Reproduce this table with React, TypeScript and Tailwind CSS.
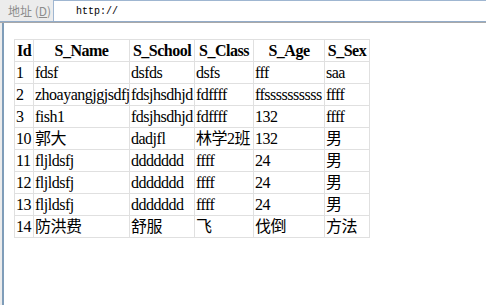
const rows: [string, string, string, string, string, string][] = [
  ["1", "fdsf", "dsfds", "dsfs", "fff", "saa"],
  ["2", "zhoayangjgjsdfj", "fdsjhsdhjd", "fdffff", "ffssssssssss", "ffff"],
  ["3", "fish1", "fdsjhsdhjd", "fdffff", "132", "ffff"],
  ["10", "郭大", "dadjfl", "林学2班", "132", "男"],
  ["11", "fljldsfj", "ddddddd", "ffff", "24", "男"],
  ["12", "fljldsfj", "ddddddd", "ffff", "24", "男"],
  ["13", "fljldsfj", "ddddddd", "ffff", "24", "男"],
  ["14", "防洪费", "舒服", "飞", "伐倒", "方法"],
];

const headers = ["Id", "S_Name", "S_School", "S_Class", "S_Age", "S_Sex"];
const widths = ["w-[19px]", "w-[96px]", "w-[65px]", "w-[59px]", "w-[71px]", "w-[45px]"];

const App = () => {
  return (
    <div className="flex h-[305px] w-[486px] flex-col overflow-hidden bg-white">
      {/* address bar */}
      <div className="flex h-[21px]">
        <div className="flex w-[53px] items-center bg-[#ececec] pl-[8px] text-[12px] text-[#8c8c8c] [font-family:'Noto_Sans_CJK_SC',sans-serif]">
          地址 (<span className="underline">D</span>)
        </div>
        <div className="flex flex-1 items-center border-l border-t border-[#9fb6d1] bg-white pl-[22px] text-[10px] text-black [font-family:'Liberation_Mono',monospace]">
          http://
        </div>
      </div>
      <div className="h-px bg-[#93acc9]" />
      <div className="h-px bg-[#a9a9a9]" />

      {/* page */}
      <div className="flex flex-1">
        <div className="w-[2px] bg-[#ececec]" />
        <div className="w-[2px] bg-[#7f9db9]" />
        <div className="flex-1 pl-[10px] pt-[16px]">
          <table className="w-[356px] table-fixed border-collapse border border-b-[#a5b9d3] border-l-[#e0e0e0] border-r-[#a5b9d3] border-t-[#e0e0e0] text-[16px] leading-[21px] tracking-[-0.5px] text-black [font-family:'Liberation_Serif','Noto_Sans_CJK_SC',serif]">
            <colgroup>
              {widths.map((w, i) => (
                <col key={i} className={w} />
              ))}
            </colgroup>
            <thead>
              <tr>
                {headers.map((h) => (
                  <th key={h} className="h-[22px] overflow-hidden whitespace-nowrap border border-[#e0e0e0] p-0 text-center font-bold">
                    {h}
                  </th>
                ))}
              </tr>
            </thead>
            <tbody>
              {rows.map((r) => (
                <tr key={r[0]}>
                  {r.map((c, i) => (
                    <td key={i} className="h-[22px] overflow-hidden whitespace-nowrap border border-[#e0e0e0] py-0 pl-[1px] pr-0">
                      {c}
                    </td>
                  ))}
                </tr>
              ))}
            </tbody>
          </table>
        </div>
      </div>
    </div>
  );
};

export default App;
